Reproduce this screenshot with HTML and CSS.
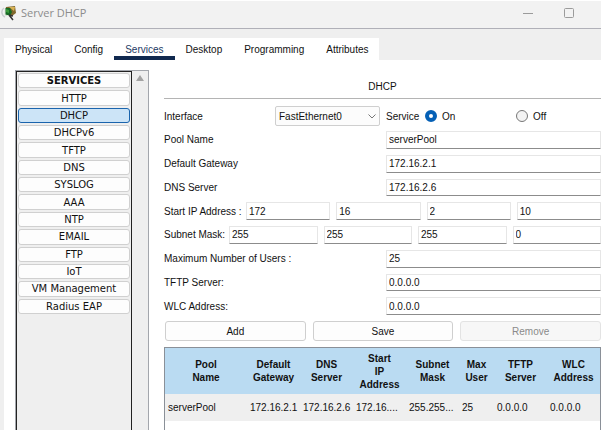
FILE: index.html
```html
<!DOCTYPE html>
<html lang="en">
<head>
<meta charset="utf-8">
<title>Server DHCP</title>
<link rel="stylesheet" href="styles.css">
</head>
<body>
<div class="window">
  <header class="titlebar">
    <svg class="app-icon" viewBox="0 0 16 16" aria-hidden="true">
      <path d="M3 3C0 5 0 10 4 12" fill="none" stroke="#c9cdd0" stroke-width="1.5"/>
      <path d="M5 2 14 1 15 8 11 11 4 8Z" fill="#80672d"/>
      <path d="M8 2 14 2 13 6Z" fill="#d9b354"/>
      <path d="M4 3 9 3 11 7 9 11 4 10Z" fill="#176b24"/>
      <path d="M5 4 8 5 8 8 5 7Z" fill="#3c9c3e"/>
      <path d="M4 3V10L9 11" fill="none" stroke="#dfe8dc"/>
      <path d="M8 10 12 15M8 10 12 11" stroke="#333" stroke-width="1.5"/>
    </svg>
    <h1 class="title">Server DHCP</h1>
    <button class="window-button" aria-label="Minimize"><svg viewBox="0 0 10 10"><path d="M0 5.5H10" stroke="#9b9b9b"/></svg></button>
    <button class="window-button" aria-label="Maximize"><svg viewBox="0 0 10 10"><rect x=".5" y=".5" width="9" height="9" rx="1" fill="none" stroke="#9b9b9b"/></svg></button>
  </header>
  <div class="frame">
    <nav class="tabs">
      <a class="tab" href="#physical">Physical</a>
      <a class="tab" href="#config">Config</a>
      <a class="tab tab-active" href="#services">Services</a>
      <a class="tab" href="#desktop">Desktop</a>
      <a class="tab" href="#programming">Programming</a>
      <a class="tab" href="#attributes">Attributes</a>
    </nav>
    <div class="content">
      <aside class="sidebar">
        <div class="services">
          <div class="service-list">
            <h2 class="service service-heading">SERVICES</h2>
            <button class="service">HTTP</button>
            <button class="service service-active">DHCP</button>
            <button class="service">DHCPv6</button>
            <button class="service">TFTP</button>
            <button class="service">DNS</button>
            <button class="service">SYSLOG</button>
            <button class="service">AAA</button>
            <button class="service">NTP</button>
            <button class="service">EMAIL</button>
            <button class="service">FTP</button>
            <button class="service">IoT</button>
            <button class="service">VM Management</button>
            <button class="service">Radius EAP</button>
          </div>
        </div>
        <div class="scrollbar"><svg viewBox="0 0 8 6" aria-hidden="true"><path d="M4 0 8 6H0Z" fill="#a3a3a3"/></svg></div>
      </aside>
      <main class="panel">
        <h2 class="panel-title">DHCP</h2>
        <form class="form">
          <div class="interface-row">
            <label for="interface">Interface</label>
            <div class="select-box">
              <select id="interface"><option>FastEthernet0</option></select>
              <svg class="chevron" viewBox="0 0 8 5" aria-hidden="true"><path d="M.5 .5 4 4 7.5 .5" fill="none" stroke="#777"/></svg>
            </div>
            <div class="service-switch" role="radiogroup" aria-labelledby="service-label">
              <span id="service-label">Service</span>
              <label class="choice"><input type="radio" name="service" checked>On</label>
              <label class="choice"><input type="radio" name="service">Off</label>
            </div>
          </div>
          <div class="fields">
            <div class="field"><label for="pool">Pool Name</label><input id="pool" value="serverPool"></div>
            <div class="field"><label for="gateway">Default Gateway</label><input id="gateway" value="172.16.2.1"></div>
            <div class="field"><label for="dns">DNS Server</label><input id="dns" value="172.16.2.6"></div>
            <div class="octets octets-start">
              <label for="start1">Start IP Address :</label>
              <input id="start1" value="172"><input aria-label="Start IP octet 2" value="16"><input aria-label="Start IP octet 3" value="2"><input aria-label="Start IP octet 4" value="10">
            </div>
            <div class="octets octets-mask">
              <label for="mask1">Subnet Mask:</label>
              <input id="mask1" value="255"><input aria-label="Mask octet 2" value="255"><input aria-label="Mask octet 3" value="255"><input aria-label="Mask octet 4" value="0">
            </div>
            <div class="field"><label for="users">Maximum Number of Users :</label><input id="users" value="25"></div>
            <div class="field"><label for="tftp">TFTP Server:</label><input id="tftp" value="0.0.0.0"></div>
            <div class="field"><label for="wlc">WLC Address:</label><input id="wlc" value="0.0.0.0"></div>
          </div>
          <div class="actions">
            <button type="button">Add</button>
            <button type="button">Save</button>
            <button type="button" disabled>Remove</button>
          </div>
        </form>
        <div class="table-box">
          <table>
            <colgroup><col><col class="col-mid"><col class="col-mid"><col class="col-mid"><col class="col-mid"><col class="col-short"><col class="col-mid"><col class="col-mid"></colgroup>
            <thead>
              <tr><th>Pool<br>Name</th><th>Default<br>Gateway</th><th>DNS<br>Server</th><th>Start<br>IP<br>Address</th><th>Subnet<br>Mask</th><th>Max<br>User</th><th>TFTP<br>Server</th><th>WLC<br>Address</th></tr>
            </thead>
            <tbody>
              <tr><td>serverPool</td><td>172.16.2.1</td><td>172.16.2.6</td><td>172.16....</td><td>255.255...</td><td>25</td><td>0.0.0.0</td><td>0.0.0.0</td></tr>
            </tbody>
          </table>
        </div>
      </main>
    </div>
  </div>
</div>
</body>
</html>
```
FILE: styles.css
```css
* { box-sizing: border-box; }

body {
  margin: 0;
  padding: 1px 3px 0 0;
  height: 100vh;
  overflow: hidden;
  background: #fff;
  color: #111;
  font: 10px/13px "Liberation Sans", Arial, sans-serif;
}

h1, h2 { margin: 0; font: inherit; }
button, input, select { font: inherit; color: inherit; }

.window { display: flex; flex-direction: column; height: 100%; }

.titlebar {
  display: flex;
  align-items: center;
  height: 28px;
  padding: 0 26px 3px 1px;
  background: #f2f2f2;
  border-bottom: 1px solid #b0b0b8;
}
.app-icon { width: 16px; height: 16px; margin-right: 4px; }
.title { flex: 1; color: #8c8c8c; font: 11px/16px "Open Sans", sans-serif; }
.window-button {
  width: 12px;
  height: 20px;
  margin-left: 29px;
  padding: 0;
  border: 0;
  background: none;
}
.window-button svg { display: block; width: 10px; height: 10px; margin: auto; }

.frame {
  display: flex;
  flex: 1;
  flex-direction: column;
  min-height: 0;
  padding: 9px 0 0 4px;
  background: #efefef;
}

.tabs {
  display: flex;
  align-self: flex-start;
  height: 22px;
  background: #fff;
}
.tab {
  padding: 5px 11px 0;
  border-bottom: 4px solid transparent;
  color: #111;
  text-decoration: none;
}
.tab-active { border-color: #10294f; color: #1c3a63; }

.content {
  display: flex;
  flex: 1;
  min-height: 0;
  padding: 10px 0 0 11px;
  background: #fff;
}

.sidebar {
  display: flex;
  flex: none;
  width: 134px;
  margin-right: 15px;
  background: #efefef;
  border: 1px solid #a3a6ac;
  border-bottom: 0;
}
.services { width: 116px; padding: 1px; border: 1px solid #222; border-bottom: 0; }
.service-list { display: grid; grid-auto-rows: 1fr; gap: 2px; height: 241px; }
.service {
  display: flex;
  align-items: center;
  justify-content: center;
  min-height: 0;
  padding: 0;
  border: 1px solid #d0d0d0;
  border-radius: 3px;
  background: #fdfdfd;
  font: 10px/13px "DejaVu Sans", Verdana, sans-serif;
}
.service-heading { font-weight: bold; }
.service-active { background: #cce4f7; border-color: #1a64ad; }
.scrollbar { flex: 1; padding-top: 4px; line-height: 6px; text-align: center; }
.scrollbar svg { width: 8px; height: 6px; }

.panel { display: flex; flex: 1; flex-direction: column; min-width: 0; }
.panel-title {
  height: 29px;
  padding-top: 10px;
  border-bottom: 1px solid #b4b4b4;
  text-align: center;
}

.interface-row {
  display: grid;
  grid-template-columns: 111px 105px 1fr;
  align-items: center;
  height: 20px;
  margin: 7px 0 5px;
}
.select-box { position: relative; }
select {
  display: block;
  width: 100%;
  height: 20px;
  padding: 0 3px;
  appearance: none;
  border: 1px solid #cfcfcf;
  border-radius: 2px;
  background: #fcfcfc;
}
.chevron { position: absolute; top: 8px; right: 4px; width: 8px; height: 5px; }
.service-switch {
  display: grid;
  grid-template-columns: 39px 91px 1fr;
  align-items: center;
  padding-left: 6px;
}
.choice { display: flex; align-items: center; gap: 5px; }
.choice input {
  width: 12px;
  height: 12px;
  margin: 0;
  appearance: none;
  border: 1px solid #777;
  border-radius: 50%;
  background: #f3f3f3;
}
.choice input:checked { border: 4px solid #0560b6; background: #fff; }

.fields { display: grid; grid-auto-rows: 1fr; row-gap: 6px; height: 184px; }
.field { display: grid; grid-template-columns: 222px 1fr; }
.fields label { align-self: center; white-space: nowrap; }
.fields input {
  width: 100%;
  min-width: 0;
  height: 100%;
  min-height: 0;
  padding: 0 2px;
  border: 1px solid #e6e6e6;
  border-bottom-color: #8c8c8c;
  border-radius: 1px;
  background: #fff;
}
.octets { display: grid; column-gap: 6px; }
.octets-start { grid-template-columns: 76px repeat(4, 1fr); }
.octets-mask { grid-template-columns: 59px repeat(4, 1fr); }

.actions {
  display: grid;
  grid-template-columns: repeat(3, 1fr);
  gap: 7px;
  padding: 6px 0 6px 1px;
}
.actions button {
  height: 20px;
  padding: 0;
  border: 1px solid #cfcfcf;
  border-radius: 3px;
  background: #fdfdfd;
}
.actions button:disabled { border-color: #e3e3e3; background: #f7f7f7; color: #8a8a8a; }

.table-box { flex: 1; border: 1px solid #8a9098; border-bottom: 0; }
table { width: 100%; border-collapse: collapse; table-layout: fixed; }
.col-mid { width: 53px; }
.col-short { width: 35px; }
th { height: 46px; padding: 0; background: #badbf2; font-weight: bold; }
td {
  height: 27px;
  padding: 0 0 0 3px;
  background: #efefef;
  white-space: nowrap;
}
```
